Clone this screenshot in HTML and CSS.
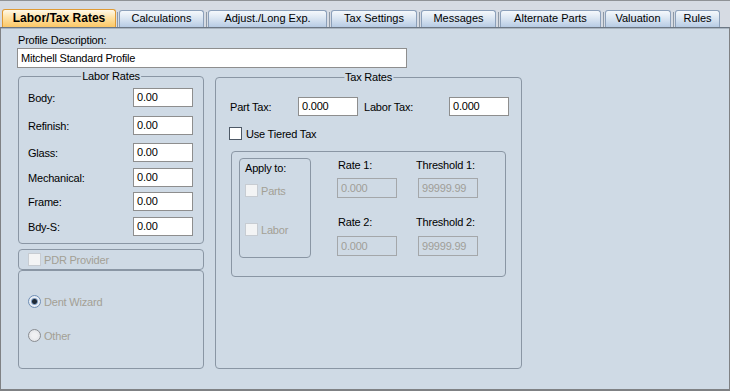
FILE: index.html
```html
<!DOCTYPE html>
<html>
<head>
<meta charset="utf-8">
<link rel="stylesheet" href="styles.css">
</head>
<body>
<div class="app">
  <div class="tabbar">
    <div class="tab active t1">Labor/Tax Rates</div>
    <div class="tab t2">Calculations</div>
    <div class="tab t3">Adjust./Long Exp.</div>
    <div class="tab t4">Tax Settings</div>
    <div class="tab t5">Messages</div>
    <div class="tab t6">Alternate Parts</div>
    <div class="tab t7">Valuation</div>
    <div class="tab t8">Rules</div>
  </div>
  <div class="panel">
    <div class="plabel">Profile Description:</div>
    <div class="input profile">Mitchell Standard Profile</div>
    <div class="columns">
      <div class="leftcol">
        <div class="group labor">
          <span class="gtitle">Labor Rates</span>
          <div class="lrow r1"><span class="llabel">Body:</span><div class="input num">0.00</div></div>
          <div class="lrow r2"><span class="llabel">Refinish:</span><div class="input num">0.00</div></div>
          <div class="lrow r3"><span class="llabel">Glass:</span><div class="input num">0.00</div></div>
          <div class="lrow r4"><span class="llabel">Mechanical:</span><div class="input num">0.00</div></div>
          <div class="lrow r5"><span class="llabel">Frame:</span><div class="input num">0.00</div></div>
          <div class="lrow r6"><span class="llabel">Bdy-S:</span><div class="input num">0.00</div></div>
        </div>
        <div class="group pdr">
          <span class="check disabled"></span><span class="dis">PDR Provider</span>
        </div>
        <div class="group radios">
          <div class="radrow first"><span class="radio on"></span><span class="dis">Dent Wizard</span></div>
          <div class="radrow"><span class="radio"></span><span class="dis">Other</span></div>
        </div>
      </div>
      <div class="group tax">
        <span class="gtitle">Tax Rates</span>
        <div class="taxrow">
          <span class="tlabel part">Part Tax:</span>
          <div class="input num">0.000</div>
          <span class="tlabel labort">Labor Tax:</span>
          <div class="input num">0.000</div>
        </div>
        <div class="tiered"><span class="check"></span><span>Use Tiered Tax</span></div>
        <div class="inner">
          <div class="apply">
            <div class="applyt">Apply to:</div>
            <div class="arow a1"><span class="check disabled"></span><span class="dis">Parts</span></div>
            <div class="arow a2"><span class="check disabled"></span><span class="dis">Labor</span></div>
          </div>
          <div class="rates">
            <span class="rlabel">Rate 1:</span>
            <span class="rlabel th">Threshold 1:</span>
            <div class="input dinput">0.000</div>
            <div class="input dinput">99999.99</div>
            <span class="rlabel second">Rate 2:</span>
            <span class="rlabel th second">Threshold 2:</span>
            <div class="input dinput">0.000</div>
            <div class="input dinput">99999.99</div>
          </div>
        </div>
      </div>
    </div>
  </div>
</div>
</body>
</html>
```

FILE: styles.css
```css
html, body {
  margin: 0;
  padding: 0;
}
body {
  font-family: "Liberation Sans", Arial, sans-serif;
  font-size: 11px;
  letter-spacing: -0.2px;
  color: #000;
}
.app {
  width: 730px;
  height: 391px;
  background: #d6dbe3;
  display: flex;
  flex-direction: column;
}
.tabbar {
  height: 27px;
  box-sizing: border-box;
  border-top: 1px solid #8f9296;
  display: flex;
  align-items: flex-end;
  padding-left: 2px;
  gap: 4px;
}
.tab {
  position: relative;
  box-sizing: border-box;
  height: 17px;
  border: 1px solid #8ca0ba;
  border-bottom: none;
  border-radius: 3px 3px 0 0;
  background: linear-gradient(#f5f8fc, #dbe6f2 45%, #b7cbe4);
  text-align: center;
  line-height: 15px;
  font-size: 11px;
  letter-spacing: 0;
  white-space: nowrap;
}
.tab + .tab::before {
  content: "";
  position: absolute;
  left: -3px;
  top: 1px;
  bottom: 0;
  width: 1px;
  background: #8e99a6;
}
.tab.active {
  height: 18px;
  border-color: #e09a34;
  background: linear-gradient(#fff9e8, #ffe2a4 45%, #fbc766);
  font-weight: bold;
  font-size: 12px;
  line-height: 17px;
}
.t1 { width: 114px; }
.t2 { width: 85px; margin-left: -1px; }
.t3 { width: 119px; }
.t4 { width: 86px; }
.t5 { width: 75px; }
.t6 { width: 101px; }
.t7 { width: 66px; }
.t8 { width: 45px; }

.panel {
  flex: 1;
  box-sizing: border-box;
  border-left: 1px solid #7f8184;
  border-right: 1px solid #7f8184;
  border-bottom: 2px solid #7f8184;
  border-top: 1px solid #6c7784;
  box-shadow: inset 0 1px 0 #aab5c1;
  background: #cfdae5;
  padding: 5px 0 0 17px;
}
.plabel {
  line-height: 14px;
}
.input {
  box-sizing: border-box;
  background: #fff;
  border: 1px solid #8e8e8e;
  height: 19px;
  line-height: 17px;
  padding-left: 3px;
  white-space: nowrap;
}
.profile {
  width: 390px;
  height: 20px;
  line-height: 18px;
  margin: 1px 0 0 -1px;
}
.columns {
  display: flex;
  margin-top: 8px;
  gap: 11px;
  align-items: flex-start;
}
.leftcol {
  width: 186px;
  display: flex;
  flex-direction: column;
}
.group {
  position: relative;
  box-sizing: border-box;
  border: 1px solid #8a96a4;
  border-radius: 4px;
}
.gtitle {
  position: absolute;
  top: -8px;
  left: 50%;
  transform: translateX(-50%);
  background: #cfdae5;
  padding: 0 1px;
  line-height: 14px;
  white-space: nowrap;
}
.labor {
  height: 168px;
  padding-left: 9px;
}
.lrow {
  display: flex;
  align-items: center;
  height: 19px;
}
.llabel {
  width: 105px;
}
.num {
  width: 60px;
}
.r1 { margin-top: 11px; }
.r2 { margin-top: 9px; }
.r3 { margin-top: 8px; }
.r4 { margin-top: 6px; }
.r5 { margin-top: 5px; }
.r6 { margin-top: 6px; }

.pdr {
  margin-top: 5px;
  height: 21px;
  display: flex;
  align-items: center;
  padding-left: 9px;
}
.radios {
  height: 99px;
  padding: 24px 0 0 9px;
}
.radrow {
  display: flex;
  align-items: center;
  height: 13px;
}
.radrow + .radrow {
  margin-top: 21px;
}
.check {
  box-sizing: border-box;
  width: 13px;
  height: 13px;
  flex: none;
  border: 1px solid #4e5966;
  background: #fff;
  margin-right: 4px;
}
.check.disabled {
  border-color: #c7ccd2;
  background: #f3f4f5;
  margin-right: 3px;
}
.dis {
  color: #a3a095;
}
.radio {
  box-sizing: border-box;
  width: 13px;
  height: 13px;
  flex: none;
  border-radius: 50%;
  border: 1px solid #8a8d92;
  background: radial-gradient(circle at 50% 50%, #f0f0f2 30%, #dcdde2);
  margin-right: 3px;
}
.radio.on {
  border-color: #6f8fb6;
  background: radial-gradient(circle at 50% 50%, #1f2a36 0, #1f2a36 2px, #7d9ac0 3px, #e9eef5 4px, #dfe5ee);
}

.tax {
  width: 307px;
  height: 292px;
  margin-top: 1px;
  padding: 19px 0 0 14px;
}
.taxrow {
  display: flex;
  align-items: center;
  height: 19px;
}
.tlabel.part {
  width: 68px;
}
.tlabel.labort {
  width: 85px;
  margin-left: 6px;
}
.tiered {
  display: flex;
  align-items: center;
  margin: 11px 0 0 -1px;
  height: 13px;
}
.inner {
  box-sizing: border-box;
  width: 275px;
  height: 126px;
  margin: 11px 0 0 1px;
  border: 1px solid #8a96a4;
  border-radius: 4px;
  padding: 6px 0 0 7px;
  display: flex;
}
.apply {
  box-sizing: border-box;
  width: 72px;
  height: 100px;
  border: 1px solid #8a96a4;
  border-radius: 4px;
  padding: 2px 0 0 5px;
}
.applyt {
  line-height: 14px;
}
.arow {
  display: flex;
  align-items: center;
  height: 13px;
}
.a1 { margin-top: 9px; }
.a2 { margin-top: 26px; }
.rates {
  margin-left: 26px;
  display: grid;
  grid-template-columns: 60px 60px;
  column-gap: 21px;
  align-content: start;
}
.rlabel {
  line-height: 14px;
  margin-left: 1px;
  margin-bottom: 6px;
  white-space: nowrap;
}
.rlabel.th {
  margin-left: -2px;
}
.rlabel.second {
  margin-top: 17px;
  margin-bottom: 7px;
}
.dinput {
  height: 20px;
  line-height: 18px;
  background: transparent;
  border-color: #a4a7aa;
  color: #a09e98;
}
```
